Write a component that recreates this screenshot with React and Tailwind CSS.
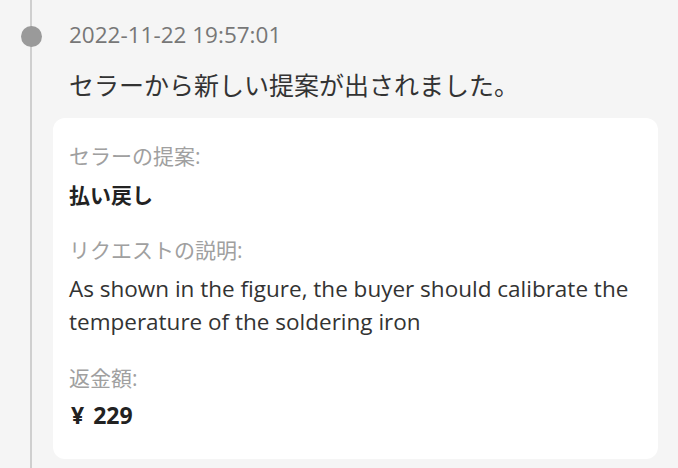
export default function App() {
  return (
    <div className="w-[678px] h-[468px] bg-[#f5f5f5] flex overflow-hidden font-['Open_Sans','Noto_Sans_CJK_JP',sans-serif]">
      <div className="relative w-[53px] shrink-0">
        <div className="absolute left-[30px] top-0 bottom-0 w-[2px] bg-[#cfcfcf]" />
        <div className="absolute left-[21px] top-[26px] w-[21px] h-[21px] rounded-full bg-[#9a9a9a]" />
      </div>
      <div className="flex-1 flex flex-col pr-[20px]">
        <div className="pl-4 pt-[20px] text-[22.5px] leading-[30px] text-[#777]">2022-11-22 19:57:01</div>
        <div className="pl-4 mt-[18px] text-[25px] leading-[34px] text-[#333]">セラーから新しい提案が出されました。</div>
        <div className="mt-[16px] bg-white rounded-[12px] px-4 pt-[23px] pb-[29px] flex flex-col">
          <div className="text-[21px] leading-[30px] text-[#a0a0a0]">セラーの提案:</div>
          <div className="mt-[9px] text-[21px] leading-[30px] font-bold text-[#222]">払い戻し</div>
          <div className="mt-[25px] text-[21px] leading-[30px] text-[#a0a0a0]">リクエストの説明:</div>
          <div className="mt-[7px] text-[22.5px] leading-[33px] text-[#333]">As shown in the figure, the buyer should calibrate the temperature of the soldering iron</div>
          <div className="mt-[25px] text-[21px] leading-[30px] text-[#a0a0a0]">返金額:</div>
          <div className="mt-[7px] text-[23px] leading-[30px] font-bold text-[#222] flex items-baseline">
            <span className="ml-[2px] mr-[9px]">¥</span>
            <span>229</span>
          </div>
        </div>
      </div>
    </div>
  );
}
